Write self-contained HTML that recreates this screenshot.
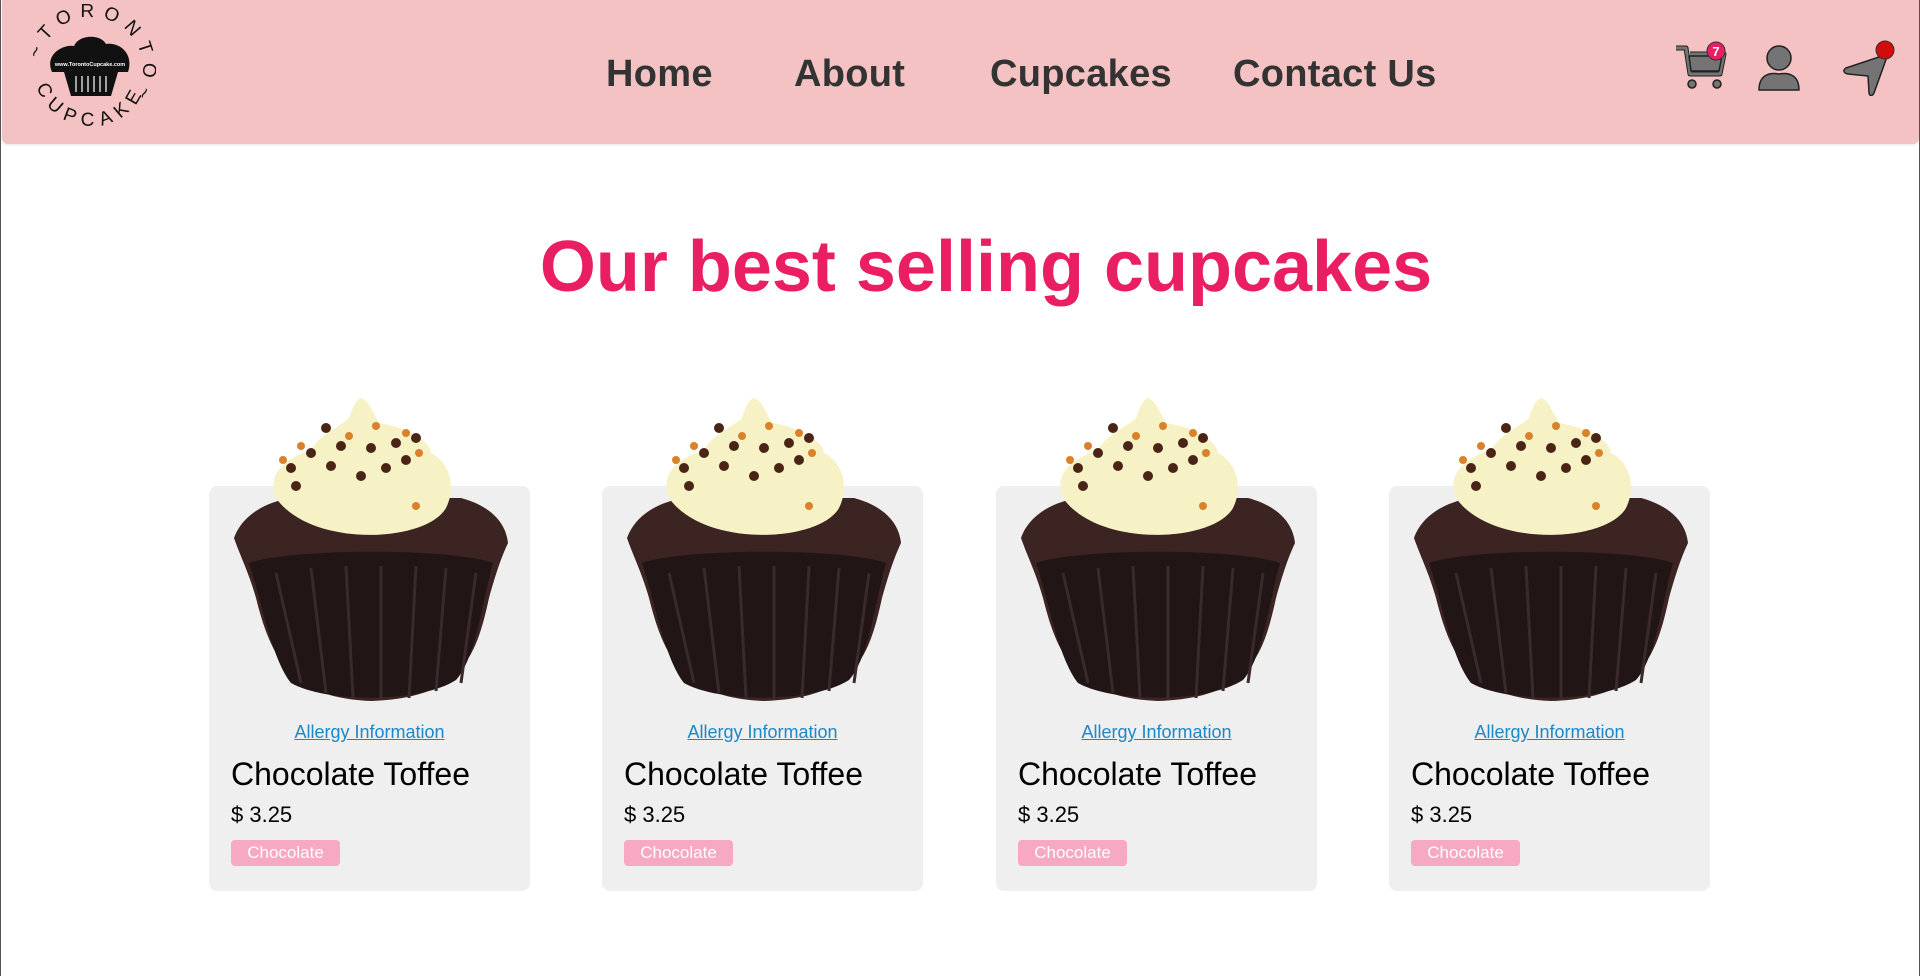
<!DOCTYPE html>
<html><head><meta charset="utf-8"><style>
*{margin:0;padding:0;box-sizing:border-box}
body{width:1920px;height:976px;background:#fff;font-family:"Liberation Sans",sans-serif;position:relative;overflow:hidden;border-left:1px solid #555;border-right:1px solid #555}
header{position:absolute;left:1px;top:0;width:1917px;height:144px;background:#f4c2c2;border-radius:0 0 6px 6px;box-shadow:0 1px 2px rgba(0,0,0,.1)}
nav a{position:absolute;top:53px;font-size:38px;font-weight:bold;color:#333;text-decoration:none;letter-spacing:0.3px}
h1{position:absolute;left:0;width:1970px;text-align:center;top:226px;font-size:72px;color:#e91e63;font-weight:bold}
.card{position:absolute;top:486px;width:321px;height:405px;background:#efefef;border-radius:8px}
.cup{position:absolute;top:398px;width:280px;height:305px}
.al{position:absolute;top:722px;width:321px;text-align:center;font-size:18px;color:#1c87c9;text-decoration:underline}
.nm{position:absolute;top:756px;font-size:32px;color:#000}
.pr{position:absolute;top:802px;font-size:22px;color:#000}
.tg{position:absolute;top:840px;width:109px;height:26px;background:#f7a9c4;border-radius:4px;color:#fff;font-size:17px;text-align:center;line-height:26px}
</style></head><body>
<header>
<svg style="position:absolute;left:24px;top:4px" width="130" height="130" viewBox="0 0 130 130">
<defs><path id="c1" d="M65,65 m-52,0 a52,52 0 1,1 104,0 a52,52 0 1,1 -104,0"/><path id="c2" d="M8,65 a57,57 0 0,0 114,0"/></defs>
<text font-size="19" fill="#111" letter-spacing="8" font-family="Liberation Sans"><textPath href="#c1" startOffset="3%">~TORONTO~</textPath></text>
<text font-size="19" fill="#111" letter-spacing="7" font-family="Liberation Sans"><textPath href="#c2" startOffset="10%">CUPCAKE</textPath></text>
<path d="M26,68 C18,50 38,40 48,42 C53,30 75,30 80,40 C94,38 108,50 102,68 Z" fill="#111"/>
<text x="64" y="62" font-size="5.5" fill="#fff" text-anchor="middle" font-weight="bold">www.TorontoCupcake.com</text>
<path d="M38,68 L92,68 L85,92 L45,92 Z" fill="#111"/>
<g stroke="#fff" stroke-width="1.2"><path d="M50,72V88M56,72V88M62,72V88M68,72V88M74,72V88M80,72V88"/></g>
</svg>
<nav><a style="left:604px">Home</a><a style="left:792px">About</a><a style="left:988px">Cupcakes</a><a style="left:1231px">Contact Us</a></nav>
<svg style="position:absolute;left:1670px;top:40px" width="240" height="56" viewBox="0 0 240 56">
<g fill="#747474" stroke="#222" stroke-width="1.5" stroke-linejoin="round">
<path d="M4,8 H14 L18,34 H48 L52,14 H18" fill="none" stroke="#222" stroke-width="5"/>
<path d="M4,8 H14 L18,34 H48 L52,14 H18" fill="none" stroke="#747474" stroke-width="3"/>
<circle cx="20" cy="44" r="4"/><circle cx="45" cy="44" r="4"/>
<path d="M17,16 H50 L47,31 H19 Z"/>
<circle cx="107" cy="18" r="12"/>
<path d="M87,50 C87,36 96,32 107,34 C118,32 127,36 127,50 Z"/>
<path d="M174,28 L216,14 L202,53 C200,57 197,56 197,52 L196,36 L176,34 C171,33 171,30 174,28 Z"/>
</g>
<circle cx="44" cy="11" r="9" fill="#e91e63" stroke="#333" stroke-width="1"/>
<text x="44" y="16" font-size="13" font-weight="bold" fill="#fff" text-anchor="middle">7</text>
<circle cx="213" cy="10" r="9" fill="#d00c0c" stroke="#333" stroke-width="1"/>
</svg>
</header>
<h1>Our best selling cupcakes</h1>

<svg width="0" height="0" style="position:absolute"><defs>
<g id="cc">
<path d="M3,140 C10,120 30,105 60,100 L230,100 C260,108 275,125 277,145 C270,160 265,175 258,200 C245,260 230,300 140,303 C60,300 40,260 25,200 C18,175 10,160 3,140 Z" fill="#3b2422"/>
<path d="M18,165 C60,150 220,150 262,165 C252,200 245,260 225,282 C190,305 95,305 60,285 C40,260 30,200 18,165 Z" fill="#211516"/>
<g stroke="#3a2a2c" stroke-width="3"><path d="M45,175 L70,285M80,170 L95,295M115,168 L122,300M150,168 L150,302M185,168 L178,300M215,170 L205,293M245,175 L230,285"/></g>
<path d="M45,100 C35,75 55,60 80,52 C90,35 110,28 118,20 C122,8 125,2 130,0 C138,2 142,15 148,25 C180,30 200,45 200,55 C220,65 225,90 215,110 C195,145 80,150 45,100 Z" fill="#f7f2c6"/>
<g fill="#4a2414"><circle cx="80" cy="55" r="5"/><circle cx="110" cy="48" r="5"/><circle cx="140" cy="50" r="5"/><circle cx="165" cy="45" r="5"/><circle cx="100" cy="68" r="5"/><circle cx="155" cy="70" r="5"/><circle cx="175" cy="62" r="5"/><circle cx="60" cy="70" r="5"/><circle cx="95" cy="30" r="5"/><circle cx="130" cy="78" r="5"/><circle cx="65" cy="88" r="5"/><circle cx="185" cy="40" r="5"/></g>
<g fill="#d9822b"><circle cx="70" cy="48" r="4"/><circle cx="118" cy="38" r="4"/><circle cx="175" cy="35" r="4"/><circle cx="52" cy="62" r="4"/><circle cx="188" cy="55" r="4"/><circle cx="145" cy="28" r="4"/><circle cx="185" cy="108" r="4"/></g>
</g></defs></svg>

<div class="card" style="left:208px"></div><div class="card" style="left:601px"></div><div class="card" style="left:995px"></div><div class="card" style="left:1388px"></div>

<svg class="cup" style="left:230px" viewBox="0 0 280 305"><use href="#cc"/></svg>
<svg class="cup" style="left:623px" viewBox="0 0 280 305"><use href="#cc"/></svg>
<svg class="cup" style="left:1017px" viewBox="0 0 280 305"><use href="#cc"/></svg>
<svg class="cup" style="left:1410px" viewBox="0 0 280 305"><use href="#cc"/></svg>

<div class="al" style="left:208px">Allergy Information</div><div class="al" style="left:601px">Allergy Information</div><div class="al" style="left:995px">Allergy Information</div><div class="al" style="left:1388px">Allergy Information</div>
<div class="nm" style="left:230px">Chocolate Toffee</div><div class="nm" style="left:623px">Chocolate Toffee</div><div class="nm" style="left:1017px">Chocolate Toffee</div><div class="nm" style="left:1410px">Chocolate Toffee</div>
<div class="pr" style="left:230px">$ 3.25</div><div class="pr" style="left:623px">$ 3.25</div><div class="pr" style="left:1017px">$ 3.25</div><div class="pr" style="left:1410px">$ 3.25</div>
<div class="tg" style="left:230px">Chocolate</div><div class="tg" style="left:623px">Chocolate</div><div class="tg" style="left:1017px">Chocolate</div><div class="tg" style="left:1410px">Chocolate</div>
</body></html>
